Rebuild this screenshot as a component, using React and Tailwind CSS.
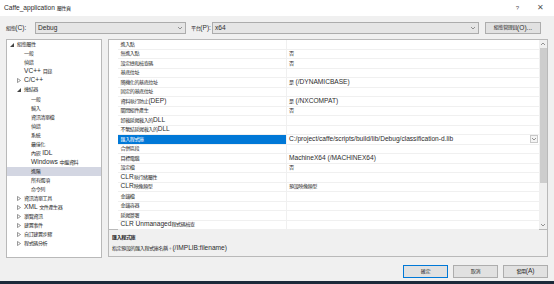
import React from "react";

// CJK glyphs in the shot are narrower than the latin text, so they get their own size
const CJK = /([\u2e80-\u9fff\uf900-\ufaff\uff00-\uffef\u3000-\u303f]+)/;

function T({ children }) {
  return String(children)
    .split(CJK)
    .map((p, i) =>
      i % 2 ? (
        <span key={i} className="text-[5.1px] tracking-[-0.45px]">
          {p}
        </span>
      ) : (
        p
      )
    );
}

function Chevron({ up }) {
  return (
    <svg width="6" height="4" viewBox="0 0 6 4" className="block">
      <polyline
        points={up ? "1,3 3,1 5,3" : "1,1 3,3 5,1"}
        fill="none"
        stroke="#7a7a7a"
        strokeWidth="0.8"
      />
    </svg>
  );
}

const tree = [
  [0, "open", "組態屬性"],
  [1, null, "一般"],
  [1, null, "偵錯"],
  [1, null, "VC++ 目錄"],
  [1, "closed", "C/C++"],
  [1, "open", "連結器"],
  [2, null, "一般"],
  [2, null, "輸入"],
  [2, null, "資訊清單檔"],
  [2, null, "偵錯"],
  [2, null, "系統"],
  [2, null, "最佳化"],
  [2, null, "內嵌 IDL"],
  [2, null, "Windows 中繼資料"],
  [2, null, "進階", true],
  [2, null, "所有選項"],
  [2, null, "命令列"],
  [1, "closed", "資訊清單工具"],
  [1, "closed", "XML 文件產生器"],
  [1, "closed", "瀏覽資訊"],
  [1, "closed", "建置事件"],
  [1, "closed", "自訂建置步驟"],
  [1, "closed", "程式碼分析"],
];

const indent = ["pl-[3px]", "pl-[10px]", "pl-[17px]"];

const props = [
  ["進入點", ""],
  ["無進入點", "否"],
  ["設定總和檢查碼", "否"],
  ["基底位址", ""],
  ["隨機化的基底位址", "是 (/DYNAMICBASE)"],
  ["固定的基底位址", ""],
  ["資料執行防止 (DEP)", "是 (/NXCOMPAT)"],
  ["關閉組件產生", "否"],
  ["卸載延遲載入的 DLL", ""],
  ["不繫結延遲載入的 DLL", ""],
  ["匯入程式庫", "C:/project/caffe/scripts/build/lib/Debug/classification-d.lib", true],
  ["合併區段", ""],
  ["目標電腦", "MachineX64 (/MACHINEX64)"],
  ["設定檔", "否"],
  ["CLR 執行緒屬性", ""],
  ["CLR 映像類型", "預設映像類型"],
  ["金鑰檔", ""],
  ["金鑰容器", ""],
  ["延遲簽署", ""],
  ["CLR Unmanaged 程式碼檢查", ""],
];

function TreeRow({ level, arrow, label, selected }) {
  return (
    <div className={`flex items-center h-[9.05px] ${indent[level]} ${selected ? "bg-[#d3d6e2]" : ""}`}>
      <div className="w-[7px] flex items-center">
        {arrow === "open" && (
          <svg width="4" height="4" viewBox="0 0 4 4">
            <polygon points="4,0 4,4 0,4" fill="#444" />
          </svg>
        )}
        {arrow === "closed" && (
          <svg width="4" height="5" viewBox="0 0 4 5">
            <polygon points="0.5,0.5 3.5,2.5 0.5,4.5" fill="none" stroke="#555" strokeWidth="0.6" />
          </svg>
        )}
      </div>
      <span className="whitespace-nowrap"><T>{label}</T></span>
    </div>
  );
}

function PropRow({ name, value, selected }) {
  return (
    <div className="flex h-[9.5px]">
      <div className="w-[9px] shrink-0" />
      <div
        className={`w-[168px] shrink-0 flex items-center pl-[2.5px] border-b border-[#f0f0f0] whitespace-nowrap ${
          selected ? "bg-[#0078d7] text-white" : ""
        }`}
      >
        <T>{name}</T>
      </div>
      <div className="flex-1 flex items-center pl-[2px] border-l border-b border-[#f0f0f0] whitespace-nowrap">
        <span className="flex-1"><T>{value}</T></span>
        {selected && (
          <div className="w-[8px] h-[8px] mr-[1px] border border-[#c8c8c8] bg-[#f4f4f4] flex items-center justify-center">
            <Chevron />
          </div>
        )}
      </div>
    </div>
  );
}

function Button({ children, primary }) {
  return (
    <div
      className={`w-[45px] h-[13px] flex items-center justify-center bg-[#e1e1e1] border ${
        primary ? "border-[#0078d7]" : "border-[#adadad]"
      }`}
    >
      <T>{children}</T>
    </div>
  );
}

export default function App() {
  return (
    <div className="w-[554px] h-[284px] overflow-hidden bg-[#f0f0f0] text-[6.6px] leading-none text-[#2b2b2b] font-['Liberation_Sans','Noto_Sans_CJK_TC',sans-serif]">
      {/* title bar */}
      <div className="h-[16px] bg-white flex items-center pl-[4px] pr-[10px]">
        <span className="flex-1"><T>Caffe_application 屬性頁</T></span>
        <span className="mr-[18px] text-[6px] text-[#555]">?</span>
        <span className="text-[8px] text-[#555]">✕</span>
      </div>

      {/* config row */}
      <div className="flex items-center h-[12px] mt-[6px] pl-[6px]">
        <span className="w-[29px]"><T>組態(C):</T></span>
        <div className="w-[151px] h-[12px] bg-[#e5e5e5] border border-[#acacac] flex items-center pl-[2px] pr-[2px]">
          <span className="flex-1">Debug</span>
          <Chevron />
        </div>
        <span className="w-[26px] pl-[5px]"><T>平台(P):</T></span>
        <div className="w-[267px] h-[12px] bg-[#e5e5e5] border border-[#acacac] flex items-center pl-[2px] pr-[2px]">
          <span className="flex-1">x64</span>
          <Chevron />
        </div>
        <div className="ml-[6px] w-[56px] h-[12px] bg-[#e1e1e1] border border-[#adadad] flex items-center justify-center">
          <T>組態管理員(O)...</T>
        </div>
      </div>

      {/* main */}
      <div className="flex h-[219px] mt-[5px] pl-[6px]">
        <div className="w-[96px] h-[219px] bg-white border border-[#b9b9b9]">
          {tree.map(([level, arrow, label, selected], i) => (
            <TreeRow key={i} level={level} arrow={arrow} label={label} selected={selected} />
          ))}
        </div>

        <div className="ml-[6px] w-[440px] flex flex-col">
          <div className="h-[191px] bg-white border border-[#b9b9b9] flex">
            <div className="flex-1">
              {props.map(([name, value, selected], i) => (
                <PropRow key={i} name={name} value={value} selected={selected} />
              ))}
            </div>
            <div className="w-[8px] bg-[#f0f0f0] flex flex-col items-center">
              <div className="h-[8px] flex items-center"><Chevron up /></div>
              <div className="w-[7px] h-[135px] bg-[#cdcdcd]" />
              <div className="flex-1" />
              <div className="h-[8px] flex items-center"><Chevron /></div>
            </div>
          </div>
          <div className="h-[27px] border border-t-0 border-[#b9b9b9] pl-[3px] pt-[4px]">
            <div className="font-bold"><T>匯入程式庫</T></div>
            <div className="mt-[4px]"><T>指定預設的匯入程式庫名稱。(/IMPLIB:filename)</T></div>
          </div>
        </div>
      </div>

      {/* buttons */}
      <div className="flex justify-end gap-[5px] h-[13px] mt-[7px] pr-[6px]">
        <Button primary>確定</Button>
        <Button>取消</Button>
        <Button>套用(A)</Button>
      </div>

      <div className="h-[3px] mt-[3px] bg-[#1c2a3a]" />
    </div>
  );
}
